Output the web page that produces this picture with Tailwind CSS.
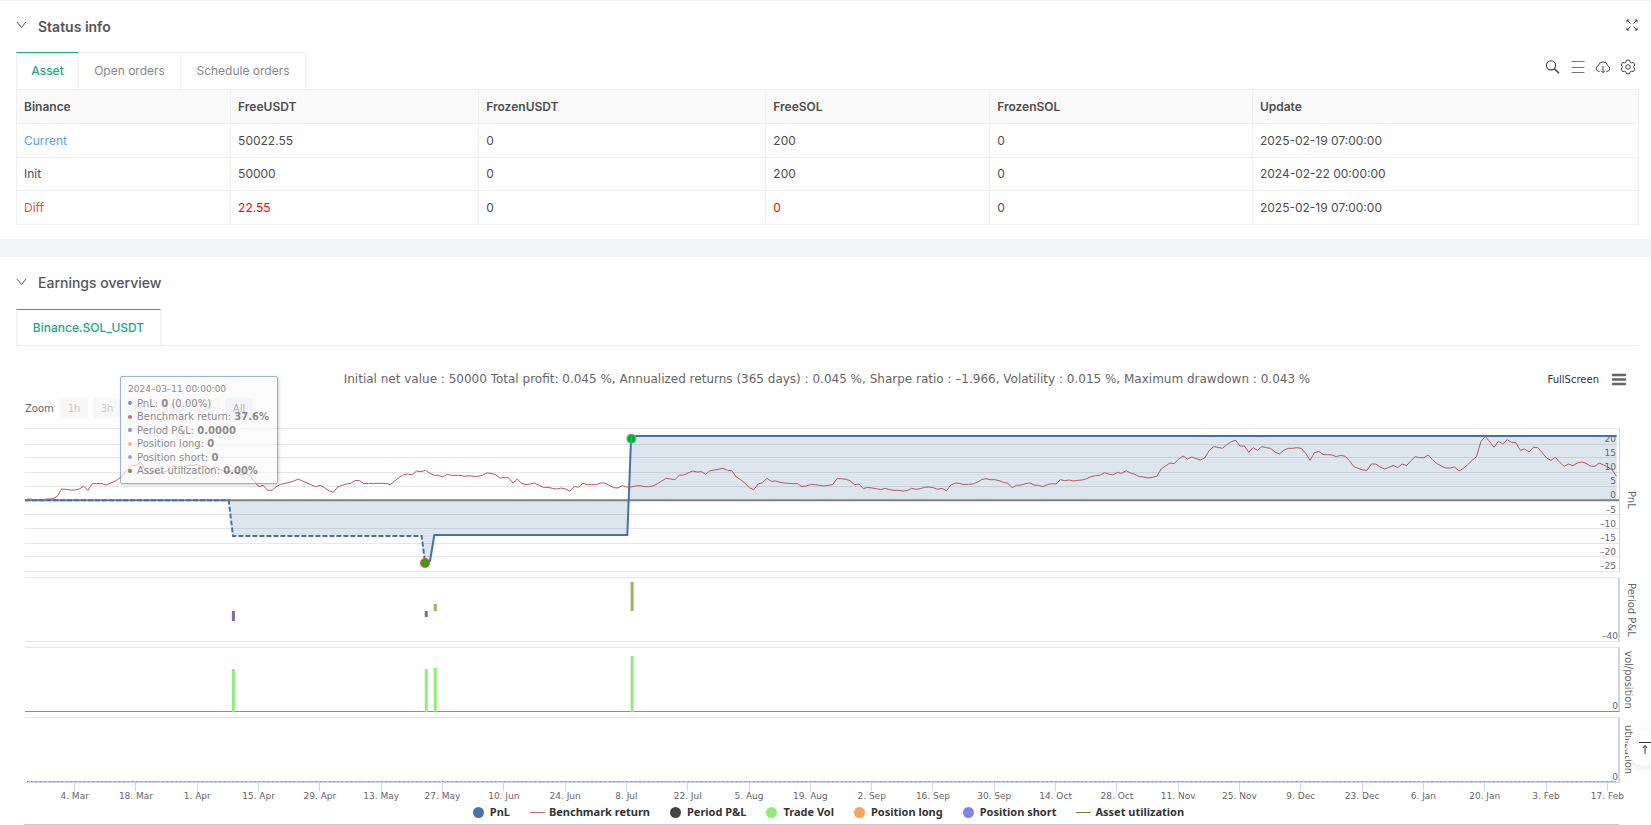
<!DOCTYPE html>
<html lang="en">
<head>
    <meta charset="utf-8"/>
    <meta content="width=device-width, initial-scale=1" name="viewport"/>
    <title>Backtest - Status info</title>
    <script src="https://cdn.jsdelivr.net/npm/@tailwindcss/browser@4"></script>
    <style>
        body {
            font-family: Inter, "Noto Sans", sans-serif;
        }
        #chart {
            font-family: "DejaVu Sans", "Noto Sans", sans-serif;
        }
        #legend {
            font-family: "Noto Sans", "Open Sans", sans-serif;
        }
        /* Keep line widths constant when the plots stretch */
        .plot path, .plot line {
            vector-effect: non-scaling-stroke;
        }
    </style>
</head>
<body class="bg-white text-[#4d4d4d] overflow-x-hidden">
    <section class="border-t border-[#efefef] pl-4 pr-3 pb-[14px]">
        <div class="flex items-center h-[51px]">
            <button aria-label="Collapse status info" class="w-[22px] pb-[3px]">
                <svg class="w-[11px] h-[8px]" viewBox="0 0 11 8" fill="none" stroke="#555"><path d="M1 1l4.500 5.500L10 1"/></svg>
            </button>
            <h2 class="text-sm font-semibold text-[#555]">Status info</h2>
            <button aria-label="Full screen" class="ml-auto mr-px pb-[3px]">
                <svg class="w-3 h-3" viewBox="0 0 12 12" fill="none" stroke="#444"><path d="M1 3.500V1h2.500M1 1l3.500 3.500M8.500 1H11v2.500M11 1L7.500 4.500M1 8.500V11h2.500M1 11l3.500-3.500M11 8.500V11H8.500M11 11L7.500 7.500"/></svg>
            </button>
        </div>
        <div class="flex items-center">
            <div class="flex text-xs text-[#888]" role="tablist">
                <button role="tab" class="h-[37px] w-[63px] border-l border-r border-[#f0f0f0] border-t-1 border-t-[#1aab7c] text-[#1aab7c] font-medium">Asset</button>
                <button role="tab" class="h-[37px] w-[102px] border-t border-r border-[#f0f0f0]">Open orders</button>
                <button role="tab" class="h-[37px] w-[125px] border-t border-r border-[#f0f0f0]">Schedule orders</button>
            </div>
            <div class="flex gap-[9px] ml-auto mr-[3px] pb-[7px]">
                <button aria-label="Search">
                    <svg class="w-4 h-4" viewBox="0 0 16 16" fill="none" stroke="#444" stroke-width="1.100"><circle cx="6" cy="6.300" r="4.600"/><path d="M9.300 9.600l4.700 4.700" stroke-width="1.500"/></svg>
                </button>
                <button aria-label="List">
                    <svg class="w-4 h-4" viewBox="0 0 16 16" fill="none" stroke="#777"><path d="M1.500 2.500h13M1.500 8.500h13M1.500 13.500h13"/></svg>
                </button>
                <button aria-label="Download">
                    <svg class="w-4 h-4" viewBox="0 0 16 16" fill="none" stroke="#444"><path d="M4.500 12.500H4A3 3 0 0 1 3.300 6.700a4.800 4.800 0 0 1 9.400 0A3 3 0 0 1 12 12.500h-.5M8 7v6.500M6 11.700l2 2 2-2"/></svg>
                </button>
                <button aria-label="Settings">
                    <svg class="w-4 h-4" viewBox="0 0 16 16" fill="none" stroke="#444"><path d="M6.500 1.200h3l.6 1.900 1.400.8 1.900-.5 1.500 2.600-1.300 1.400v1.200l1.300 1.400-1.500 2.600-1.900-.5-1.400.8-.6 1.900h-3l-.6-1.900-1.400-.8-1.900.5-1.500-2.600 1.300-1.400V7.400L1.100 6l1.500-2.600 1.900.5 1.400-.8z"/><circle cx="8" cy="8" r="2.300"/></svg>
                </button>
            </div>
        </div>
        <table class="w-full table-fixed text-xs text-left border border-[#f0f0f0]">
            <colgroup>
                <col class="w-[13.2%]"/>
                <col class="w-[15.3%]"/>
                <col class="w-[17.7%]"/>
                <col class="w-[13.8%]"/>
                <col class="w-[16.2%]"/>
                <col/>
            </colgroup>
            <thead>
                <tr class="h-[34px] bg-[#fafafa] divide-x divide-[#f0f0f0]">
                    <th class="px-[7px] font-semibold">Binance</th>
                    <th class="px-[7px] font-semibold">FreeUSDT</th>
                    <th class="px-[7px] font-semibold">FrozenUSDT</th>
                    <th class="px-[7px] font-semibold">FreeSOL</th>
                    <th class="px-[7px] font-semibold">FrozenSOL</th>
                    <th class="px-[7px] font-semibold">Update</th>
                </tr>
            </thead>
            <tbody>
                <tr class="h-[34px] border-t border-[#f0f0f0] divide-x divide-[#f0f0f0]">
                    <td class="px-[7px] text-[#5b9ee8]">Current</td>
                    <td class="px-[7px]">50022.55</td>
                    <td class="px-[7px]">0</td>
                    <td class="px-[7px]">200</td>
                    <td class="px-[7px]">0</td>
                    <td class="px-[7px]">2025-02-19 07:00:00</td>
                </tr>
                <tr class="h-[33px] border-t border-[#f0f0f0] divide-x divide-[#f0f0f0]">
                    <td class="px-[7px]">Init</td>
                    <td class="px-[7px]">50000</td>
                    <td class="px-[7px]">0</td>
                    <td class="px-[7px]">200</td>
                    <td class="px-[7px]">0</td>
                    <td class="px-[7px]">2024-02-22 00:00:00</td>
                </tr>
                <tr class="h-[34px] border-t border-[#f0f0f0] divide-x divide-[#f0f0f0]">
                    <td class="px-[7px] text-[#d9534f]">Diff</td>
                    <td class="px-[7px] text-[#f00]">22.55</td>
                    <td class="px-[7px]">0</td>
                    <td class="px-[7px] text-[#f00]">0</td>
                    <td class="px-[7px]">0</td>
                    <td class="px-[7px]">2025-02-19 07:00:00</td>
                </tr>
            </tbody>
        </table>
    </section>

    <div class="h-[18px] bg-[#f4f5f7]"></div>

    <section>
        <div class="flex items-center h-[52px] pl-4">
            <button aria-label="Collapse earnings overview" class="w-[22px] pb-[3px]">
                <svg class="w-[11px] h-[8px]" viewBox="0 0 11 8" fill="none" stroke="#555"><path d="M1 1l4.500 5.500L10 1"/></svg>
            </button>
            <h2 class="text-sm font-medium text-[#555]">Earnings overview</h2>
        </div>
        <div class="flex ml-4 mr-3 border-b border-[#f0f0f0]" role="tablist">
            <button role="tab" class="h-[36px] w-[145px] border-l border-r border-[#f0f0f0] border-t-1 border-t-[#1aab7c] text-[#1aab7c] text-xs font-medium">Binance.SOL_USDT</button>
        </div>

        <div id="chart" class="relative text-[#666]">
            <div class="grid grid-cols-[1fr_auto_1fr] items-center pl-[27px] pr-6 pt-[18px] h-[48px]">
                <span></span>
                <h3 class="text-xs">Initial net value : 50000 Total profit: 0.045 %, Annualized returns (365 days) : 0.045 %, Sharpe ratio : –1.966, Volatility : 0.015 %, Maximum drawdown : 0.043 %</h3>
                <div class="flex items-center justify-end gap-3">
                    <button class="text-[10px] text-[#333]">FullScreen</button>
                    <button aria-label="Chart menu">
                        <svg class="w-[16px] h-[13px]" viewBox="0 0 16 13" stroke="#666" stroke-width="2.500" stroke-linecap="round"><path d="M2 2h12M2 6.500h12M2 11h12"/></svg>
                    </button>
                </div>
            </div>
            <div class="flex items-center gap-[5px] pl-[25px] pt-1 text-[10px] text-[#ccc]">
                <span class="w-[30px] text-[#666]">Zoom</span>
                <button class="w-7 h-5 rounded-xs bg-[#f7f7f7]">1h</button>
                <button class="w-7 h-5 rounded-xs bg-[#f7f7f7]">3h</button>
                <button class="w-7 h-5 rounded-xs bg-[#f7f7f7]">8h</button>
                <button class="w-7 h-5 rounded-xs bg-[#f7f7f7]">12h</button>
                <button class="w-7 h-5 rounded-xs bg-[#f7f7f7]">24h</button>
                <button class="w-7 h-5 rounded-xs bg-[#e6ebf5] text-[#333]">All</button>
            </div>

            <div class="pl-[25px] pt-[10px] flex flex-col gap-[5px] text-[9px]">
                <!-- PnL -->
                <div class="flex h-[144px]">
                    <div class="relative flex-1 border-r border-[#ccd6eb]">
                        <svg class="plot w-full h-full" viewBox="0 204 4782 432" preserveAspectRatio="none" fill="none">
                            <path stroke="#e6e6e6" d="M0 205.500h4782M0 253.500h4782M0 292.500h4782M0 337.500h4782M0 379.500h4782M0 463.500h4782M0 505.500h4782M0 550.500h4782M0 589.500h4782M0 634.500h4782"/>
                            <path fill="#4572a7" fill-opacity=".18" d="M0 421H611L624 527H1190L1200 607L1215 603L1228 526H1807L1819 228H4775V421z"/>
                            <path stroke="#808080" stroke-width="2" d="M0 421H4782"/>
                            <path stroke="#4572a7" stroke-width="2" stroke-dasharray="5 2" d="M0 421H611L624 528H1190L1200 607"/>
                            <path stroke="#4572a7" stroke-width="2" d="M1200 607L1215 603L1228 525H1807L1818 240L1821 228H4775"/>
                            <path id="benchmark" stroke="#b5595c" stroke-linejoin="round"/>
                            <circle cx="1200" cy="609" r="13" fill="#00b800" stroke="#f0503c" stroke-width="4"/>
                            <path stroke="#b5703c" d="M1200 600v15"/>
                            <circle cx="1819" cy="236" r="13" fill="#00b800" stroke="#4aa8d8" stroke-width="4"/>
                            <path stroke="#4aa8a0" d="M1819 230v15"/>
                        </svg>
                        <div class="absolute right-[3px] top-1 bottom-[-1px] flex flex-col justify-between leading-[14px] text-right">
                            <span>20</span><span>15</span><span>10</span><span>5</span><span>0</span><span>–5</span><span>–10</span><span>–15</span><span>–20</span><span>–25</span>
                        </div>
                    </div>
                    <div class="w-[31px] flex justify-center items-center pr-[9px] text-[10px]"><span class="[writing-mode:vertical-rl]">PnL</span></div>
                </div>
                <!-- Period P&L -->
                <div class="flex h-[65px]">
                    <div class="relative flex-1 border-t border-b border-r-2 border-[#e6e6e6] border-r-[#ccd6eb]">
                        <svg class="plot w-full h-full" viewBox="0 0 1594 63" preserveAspectRatio="none">
                            <path fill="#80699b" d="M207 33h3v10h-3zM400 33h3v6h-3z"/>
                            <path fill="#98b560" d="M409 26h3v7h-3zM606 4h3v29h-3z"/>
                        </svg>
                        <span class="absolute right-0 bottom-0 leading-[9px]">–40</span>
                    </div>
                    <div class="w-[31px] flex justify-center items-center pr-[9px] text-[10px]"><span class="[writing-mode:vertical-rl] whitespace-nowrap">Period P&amp;L</span></div>
                </div>
                <!-- Volume / position -->
                <div class="flex h-[65px]">
                    <div class="relative flex-1 border-t border-b border-r-2 border-[#e6e6e6] border-r-[#ccd6eb] border-b-[#4aa3c8]">
                        <svg class="plot w-full h-full overflow-visible" viewBox="0 0 1594 63" preserveAspectRatio="none">
                            <path fill="#90ed7d" d="M207 21h3v43h-3zM400 21h3v43h-3zM409 20h3v44h-3zM606 8h3v56h-3z"/>
                        </svg>
                        <span class="absolute right-0 bottom-0 leading-[9px]">0</span>
                    </div>
                    <div class="w-[31px] flex justify-center items-center pr-[15px] text-[10px]"><span class="[writing-mode:vertical-rl] whitespace-nowrap">vol/position</span></div>
                </div>
                <!-- Asset utilization -->
                <div class="flex h-[66px]">
                    <div class="relative flex-1 border-t border-b border-r-2 border-[#e6e6e6] border-r-[#ccd6eb] border-b-[#ccd6eb]">
                        <svg class="plot w-full h-full" viewBox="0 0 1594 64" preserveAspectRatio="none">
                            <path stroke="#c8bf98" d="M2 63.500H1592"/>
                            <path stroke="#8a8150" stroke-dasharray="1 3.376" d="M2 63.500H1592"/>
                        </svg>
                        <span class="absolute right-0 bottom-0 leading-[9px]">0</span>
                    </div>
                    <div class="w-[31px] flex justify-center items-center pr-[15px] text-[10px]"><span class="[writing-mode:vertical-rl] whitespace-nowrap">utilization</span></div>
                </div>
            </div>
            <div id="dates" class="grid grid-cols-[repeat(26,minmax(0,1fr))] pl-11 pr-[13px] text-[9px] leading-[11px] text-center"></div>

            <ul id="legend" class="flex justify-center items-center gap-5 pl-[6px] h-5 text-[11px] font-bold text-[#333]">
                <li class="flex items-center gap-[6px]"><i class="size-[11px] rounded-full bg-[#4572a7]"></i>PnL</li>
                <li class="flex items-center gap-1"><i class="w-[15px] h-px bg-[#c0605f]"></i>Benchmark return</li>
                <li class="flex items-center gap-[6px]"><i class="size-[11px] rounded-full bg-[#434348]"></i>Period P&amp;L</li>
                <li class="flex items-center gap-[6px]"><i class="size-[11px] rounded-full bg-[#90ed7d]"></i>Trade Vol</li>
                <li class="flex items-center gap-[6px]"><i class="size-[11px] rounded-full bg-[#f7a35c]"></i>Position long</li>
                <li class="flex items-center gap-[6px]"><i class="size-[11px] rounded-full bg-[#8085e9]"></i>Position short</li>
                <li class="flex items-center gap-1"><i class="w-[15px] h-px bg-[#8a7a3a]"></i>Asset utilization</li>
            </ul>
            <div class="ml-6 mr-8 mt-[2px] h-[2px] bg-[#c3cbd6]"></div>

            <!-- Tooltip -->
            <div class="absolute left-[120px] top-[30px] w-[158px] h-[108px] flex flex-col justify-between border border-[#7a9cc6] rounded-xs bg-[#f9f9f9]/85 shadow-[1px_1px_3px_rgba(0,0,0,0.25)] opacity-75 px-[7px] pt-[5px] pb-[6px] text-[10px] leading-[13px] whitespace-nowrap text-[#666]">
                <p class="text-[9px] leading-[14px]">2024–03–11 00:00:00</p>
                <p class="flex items-center gap-[5px]"><i class="size-1 rounded-full bg-[#4572a7]"></i><span>PnL: <b>0</b> (0.00%)</span></p>
                <p class="flex items-center gap-[5px]"><i class="size-1 rounded-full bg-[#aa4643]"></i><span>Benchmark return: <b>37.6%</b></span></p>
                <p class="flex items-center gap-[5px]"><i class="size-1 rounded-full bg-[#80699b]"></i><span>Period P&amp;L: <b>0.0000</b></span></p>
                <p class="flex items-center gap-[5px]"><i class="size-1 rounded-full bg-[#f7a35c]"></i><span>Position long: <b>0</b></span></p>
                <p class="flex items-center gap-[5px]"><i class="size-1 rounded-full bg-[#8085e9]"></i><span>Position short: <b>0</b></span></p>
                <p class="flex items-center gap-[5px]"><i class="size-1 rounded-full bg-[#6b5b1a]"></i><span>Asset utilization: <b>0.00%</b></span></p>
            </div>
        </div>
    </section>

    <button aria-label="Back to top" class="fixed right-[-12px] bottom-[59px] size-9 rounded-full bg-white shadow-[0_2px_8px_rgba(0,0,0,0.1)] flex items-center justify-center">
        <svg class="w-[14px] h-[14px]" viewBox="0 0 14 14" fill="none" stroke="#333"><path d="M1 1.500h12M7 13V4.500M4.800 7L7 4.500 9.200 7"/></svg>
    </button>

    <script>
        // daily benchmark line, one y value per day
        const benchmark = [
            418,417,420,419,418,417,416,409,387,388,390,390,387,379,391,371,371,370,375,370,
            365,357,343,330,316,316,305,330,343,332,338,336,334,319,319,325,326,315,316,313,
            321,319,330,321,326,334,335,332,338,345,340,347,364,380,376,391,391,380,373,370,
            367,363,357,363,369,375,380,376,383,392,397,381,376,372,370,361,362,371,370,371,
            370,370,370,374,363,353,344,342,345,333,335,331,339,346,346,351,343,346,346,346,
            349,347,349,349,346,339,340,344,354,353,353,369,357,370,374,372,369,376,382,382,
            385,387,384,387,393,380,381,370,374,374,374,369,369,376,383,384,377,381,381,378,
            377,380,380,378,371,363,355,357,359,346,345,339,333,336,335,343,332,330,328,325,
            331,332,351,359,370,383,389,372,368,355,364,363,367,369,370,371,371,380,378,373,
            374,376,378,376,374,356,356,358,362,374,372,386,382,384,386,389,385,389,391,391,
            393,392,385,388,386,382,381,383,388,385,392,375,369,370,374,373,372,367,359,356,
            359,359,362,367,370,383,376,375,371,369,375,376,380,374,371,372,359,362,360,363,
            361,360,356,350,347,346,338,342,345,337,340,332,339,343,350,351,354,352,349,327,
            318,309,311,297,288,297,291,296,300,293,271,260,262,265,254,245,241,258,258,277,
            263,271,260,263,265,276,282,271,265,265,263,265,280,301,278,274,284,284,285,290,
            286,289,302,320,325,330,331,312,312,321,327,322,316,323,312,317,303,290,293,293,
            285,300,311,318,324,324,321,333,325,314,301,290,245,229,245,262,244,252,239,247,
            248,271,267,276,262,263,278,294,301,292,307,319,312,317,309,306,310,318,319,309,
            315,321,331,349
        ];
        const step = 4770 / (benchmark.length - 1);
        document.getElementById('benchmark').setAttribute('d',
            'M' + benchmark.map((y, i) => (5 + i * step).toFixed(1) + ' ' + y).join('L'));

        const dates = ['4. Mar', '18. Mar', '1. Apr', '15. Apr', '29. Apr', '13. May', '27. May', '10. Jun', '24. Jun',
            '8. Jul', '22. Jul', '5. Aug', '19. Aug', '2. Sep', '16. Sep', '30. Sep', '14. Oct', '28. Oct', '11. Nov',
            '25. Nov', '9. Dec', '23. Dec', '6. Jan', '20. Jan', '3. Feb', '17. Feb'];
        document.getElementById('dates').innerHTML = dates.map(date => `
            <div>
                <div class="w-px h-2 mx-auto bg-[#ccd6eb]"></div>
                ${date}
            </div>
        `).join('');
    </script>
</body>
</html>
